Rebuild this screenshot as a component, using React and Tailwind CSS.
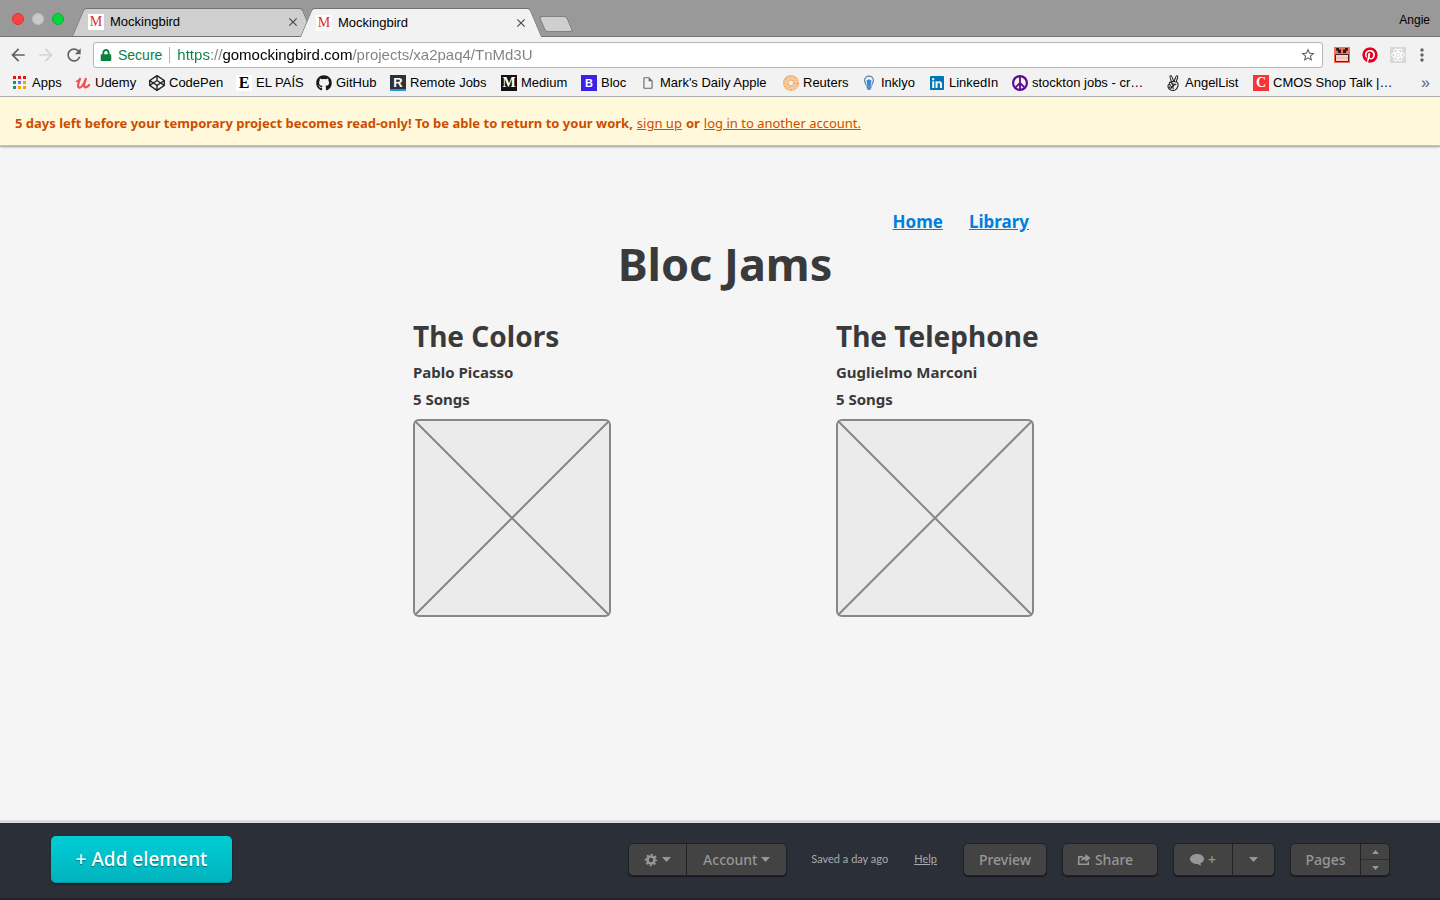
import React from "react";
import {
  MdArrowBack,
  MdArrowForward,
  MdRefresh,
  MdStarBorder,
  MdMoreVert,
  MdClose,
  MdOutlineInsertDriveFile,
} from "react-icons/md";
import { FaGithub, FaPinterest, FaLinkedin, FaCodepen, FaAngellist, FaCog, FaLock } from "react-icons/fa";

function AppsIcon() {
  const colors = ["#e11", "#e11", "#e11", "#0a9d58", "#4285f4", "#f5a300", "#0a9d58", "#f5a300", "#f5a300"];
  return (
    <svg viewBox="0 0 16 16" className="size-4">
      {colors.map((c, i) => (
        <rect key={i} x={1 + (i % 3) * 5} y={1 + Math.floor(i / 3) * 5} width="3" height="3" fill={c} />
      ))}
    </svg>
  );
}

function UdemyIcon() {
  return (
    <svg viewBox="0 0 16 16" className="size-4" fill="none" stroke="#ee5257" strokeLinecap="round" strokeLinejoin="round">
      <path d="M1.5 6.5C3 6 4.500 4.500 5 3.500" strokeWidth="1.500" />
      <path d="M5 4C4 7 2.800 9 3 11c.2 2.400 2.800 2 4.500-.5C8.800 8.600 10 6 10.800 3.800 9.800 7 8.800 9.500 9.200 11.200c.4 1.800 2.600 1.600 5-1.200" strokeWidth="2.200" />
    </svg>
  );
}

function LetterIcon({ letter, className }) {
  return (
    <span aria-hidden="true" className={"flex size-4 items-center justify-center leading-none " + className}>
      {letter}
    </span>
  );
}

function ReutersIcon() {
  return (
    <svg viewBox="0 0 16 16" className="size-4" fill="none" stroke="#f3ae6c">
      <circle cx="8" cy="8" r="7" strokeWidth="2" strokeDasharray="2 .5" />
      <circle cx="8" cy="8" r="5" strokeWidth="2" strokeDasharray="2.500 .4" stroke="#f6bd86" />
      <circle cx="8" cy="8" r="3" strokeWidth="1.800" strokeDasharray="2 .4" />
    </svg>
  );
}

function BulbIcon() {
  return (
    <svg viewBox="0 0 16 16" className="size-4">
      <path d="M5.500 10.500C5 9 3.600 8 3.600 5.500a4.400 4.400 0 0 1 8.800 0C12.400 8 11 9 10.500 10.500" fill="#eef2f6" stroke="#5c7fa8" strokeWidth="1.200" />
      <path d="M5.500 5.500 8 4.200l2.500 1.300L9.500 11h-3z" fill="#3f86cf" />
      <path d="M5.500 10.500h5v2.200L9.200 15H6.800l-1.300-2.300z" fill="#4d8fd0" />
    </svg>
  );
}

function PeaceIcon() {
  return (
    <svg viewBox="0 0 16 16" className="size-4">
      <circle cx="8" cy="8" r="8" fill="#5b0e91" />
      <circle cx="8" cy="8" r="5.800" fill="#f2f2f2" />
      <path d="M8 2v12M8 8l-4.200 4.200M8 8l4.200 4.200" fill="none" stroke="#5b0e91" strokeWidth="1.800" />
    </svg>
  );
}

function BrickIcon() {
  return (
    <svg viewBox="0 0 16 16" className="size-4">
      <rect width="16" height="16" fill="#f5705f" />
      <path d="M1.500 7.500h13v7h-13z" fill="#fbd3cd" stroke="#4a2420" />
      <path d="M2 11h12" stroke="#f3a198" strokeWidth=".8" />
      <path d="M2 1h3v1.500h2V6H4V4H2.500zM14 1h-3v1.500H9V6h3V4h1.500z" fill="#2b1a18" />
    </svg>
  );
}

function AtomIcon() {
  return (
    <svg viewBox="0 0 16 16" className="size-4" fill="none" stroke="#fff">
      <rect width="16" height="16" fill="#d8d8d8" stroke="none" />
      <circle cx="8" cy="8" r="1.500" fill="#fff" stroke="none" />
      <ellipse cx="8" cy="8" rx="6.500" ry="2.600" />
      <ellipse cx="8" cy="8" rx="6.500" ry="2.600" transform="rotate(60 8 8)" />
      <ellipse cx="8" cy="8" rx="6.500" ry="2.600" transform="rotate(120 8 8)" />
    </svg>
  );
}

function ShareIcon() {
  return (
    <svg viewBox="0 0 14 12" className="h-3 w-3.5" fill="#979797">
      <path d="M1 2h5.500L4.800 3.800H2.500v5.700h8V8.200L12 7v4H.8z" />
      <path d="M8.500 0 13.500 4 8.500 8V5.600C6.300 5.500 5 6.200 3.800 7.800 4 4.600 5.600 2.700 8.500 2.400z" />
    </svg>
  );
}

function CommentIcon() {
  return (
    <svg viewBox="0 0 14 12" className="h-3 w-3.5" fill="#979797">
      <path d="M7 0c3.900 0 7 2.200 7 5 0 1.900-1.400 3.500-3.500 4.300L11 12 7.800 10H7C3.100 10 0 7.800 0 5s3.100-5 7-5z" />
    </svg>
  );
}

function GearIcon() {
  return (
    <svg viewBox="0 0 14 14" className="size-3.5" fill="none" stroke="#979797">
      <circle cx="7" cy="7" r="3.500" strokeWidth="2.600" />
      <circle cx="7" cy="7" r="5.400" strokeWidth="1.800" strokeDasharray="2.120 2.120" strokeDashoffset="1.060" />
    </svg>
  );
}

function Caret({ up = false, small = false }) {
  return (
    <svg viewBox="0 0 8 4" className={small ? "h-1 w-[7px]" : "h-[5px] w-[9px]"} fill="#979797" preserveAspectRatio="none">
      <path d={up ? "M0 4h8L4 0z" : "M0 0h8L4 4z"} />
    </svg>
  );
}

function Tab({ active = false }) {
  const face = active
    ? "before:bg-[#f2f2f2] after:bg-[#f2f2f2] z-10"
    : "before:bg-[#cfcfcf] after:bg-[#cfcfcf] border-b border-[#717171]";
  return (
    <div
      role="tab"
      aria-selected={active}
      className={
        "relative -mr-3.5 flex w-[242px] items-center pr-3.5 pl-4 " +
        "before:absolute before:inset-y-0 before:left-1.5 before:w-1/2 before:-skew-x-[23deg] before:rounded-tl-[3px] before:border-t before:border-l before:border-[#717171] " +
        "after:absolute after:inset-y-0 after:right-1.5 after:w-1/2 after:skew-x-[23deg] after:rounded-tr-[3px] after:border-t after:border-r after:border-[#717171] " +
        face
      }
    >
      <div className="relative z-10 flex w-full items-center">
        <LetterIcon letter="M" className="bg-white font-['Liberation_Serif',serif] text-[14px] text-[#e02f26]" />
        <span className="ml-1.5 flex-1 text-[13px] text-black">Mockingbird</span>
        <button aria-label="Close tab" className="text-[#4a4a4a]">
          <MdClose className="size-3.5" />
        </button>
      </div>
    </div>
  );
}

const bookmarks = [
  { label: "Apps", icon: <AppsIcon /> },
  { label: "Udemy", icon: <UdemyIcon /> },
  { label: "CodePen", icon: <FaCodepen className="size-4 text-[#222]" /> },
  { label: "EL PAÍS", icon: <LetterIcon letter="E" className="bg-white font-['Liberation_Serif',serif] text-[16px] font-bold text-black" /> },
  { label: "GitHub", icon: <FaGithub className="size-4 text-[#191717]" /> },
  { label: "Remote Jobs", icon: <LetterIcon letter="R" className="border-b-2 border-[#1d9bd8] bg-[#2e3238] text-[13px] font-bold text-white" /> },
  { label: "Medium", icon: <LetterIcon letter="M" className="bg-[#111] font-['Liberation_Serif',serif] text-[14px] font-bold text-white" /> },
  { label: "Bloc", icon: <LetterIcon letter="B" className="bg-[#3a22e8] text-[11px] font-bold text-white" /> },
  { label: "Mark's Daily Apple", icon: <MdOutlineInsertDriveFile className="size-3.5 text-[#6a6d72]" /> },
  { label: "Reuters", icon: <ReutersIcon /> },
  { label: "Inklyo", icon: <BulbIcon /> },
  { label: "LinkedIn", icon: <FaLinkedin className="size-4 text-[#0077b5]" /> },
  { label: "stockton jobs - cr…", icon: <PeaceIcon /> },
  { label: "AngelList", icon: <FaAngellist className="size-4 text-[#222]" /> },
  { label: "CMOS Shop Talk |…", icon: <LetterIcon letter="C" className="bg-[#f93434] font-['Liberation_Serif',serif] text-[14px] font-bold text-white" /> },
];

function Browser() {
  return (
    <header className="font-['Liberation_Sans',Arial,sans-serif]">
      <div className="flex h-[37px] items-stretch bg-[#999] shadow-[inset_0_-1px_0_#717171]">
        <div className="flex w-[72px] items-center gap-2 pl-3">
          <button aria-label="Close window" className="size-3 rounded-full border border-[#e0302f] bg-[#fd4244]" />
          <button aria-label="Minimize window" className="size-3 rounded-full border border-[#bdbdbd] bg-[#cacaca]" />
          <button aria-label="Zoom window" className="size-3 rounded-full border border-[#06b32d] bg-[#04d73c]" />
        </div>
        <div role="tablist" className="flex pt-2">
          <Tab />
          <Tab active />
        </div>
        <button
          aria-label="New tab"
          className="mt-4 ml-3.5 h-4 w-7 skew-x-[23deg] self-start rounded-[3px] border border-[#808080] bg-[#cfcfcf]"
        />
        <button className="ml-auto pt-0.5 pr-2.5 text-[12px] text-black">Angie</button>
      </div>

      <div className="flex h-[31px] items-end bg-[#f2f2f2]">
        <div className="flex h-[26px] items-center gap-2 pr-[9px] pl-2 text-[#5f6368]">
          <button aria-label="Back"><MdArrowBack className="size-5" /></button>
          <button aria-label="Forward" className="text-[#d2d3d4]"><MdArrowForward className="size-5" /></button>
          <button aria-label="Reload"><MdRefresh className="size-5" /></button>
        </div>
        <div className="flex h-[26px] min-w-0 flex-1 items-center rounded-[3px] border border-[#b4b4b4] bg-white px-1.5">
          <FaLock className="size-3 text-[#0b8043]" />
          <span className="ml-1.5 text-[14px] text-[#0b8043]">Secure</span>
          <span className="mx-[7px] h-4 w-px bg-[#b4b4b4]" />
          <input
            aria-label="Address"
            defaultValue="https://gomockingbird.com/projects/xa2paq4/TnMd3U"
            className="min-w-0 flex-1 bg-[linear-gradient(to_right,#0b8043_33px,#808080_33px_45px,#000_45px_175px,#808080_175px)] bg-clip-text text-[15px] text-transparent outline-none"
          />
          <button aria-label="Bookmark this page" className="text-[#5f6368]"><MdStarBorder className="size-4" /></button>
        </div>
        <div className="flex h-[26px] items-center gap-3 pr-3 pl-[11px]">
          <button aria-label="Brick extension"><BrickIcon /></button>
          <button aria-label="Pinterest"><FaPinterest className="size-4 rounded-full bg-white text-[#e60023]" /></button>
          <button aria-label="React tools"><AtomIcon /></button>
          <button aria-label="Menu" className="-mr-1 -ml-1.5 text-[#5f6368]"><MdMoreVert className="size-5" /></button>
        </div>
      </div>

      <nav aria-label="Bookmarks" className="flex h-[29px] items-center border-b border-[#b4b4b8] bg-[#f2f2f2] pt-0.5 pr-2.5 pl-3">
        <ul className="grid flex-1 grid-cols-[63px_74px_87px_80px_74px_111px_80px_59px_143px_78px_68px_83px_153px_88px_1fr]">
          {bookmarks.map((b) => (
            <li key={b.label}>
              <a href="#" className="flex items-center gap-1 text-[13px] whitespace-nowrap text-black">
                <span className="flex size-4 shrink-0 items-center justify-center">{b.icon}</span>
                {b.label}
              </a>
            </li>
          ))}
        </ul>
        <button aria-label="More bookmarks" className="text-[16px] leading-none text-[#5f6368]">»</button>
      </nav>
    </header>
  );
}

function Album({ title, artist, songs }) {
  return (
    <article className="w-[198px] whitespace-nowrap">
      <h2 className="text-[28px] leading-9 font-bold">{title}</h2>
      <p className="mt-[5px] text-[15px] leading-[27px] font-bold">{artist}</p>
      <p className="text-[15px] leading-[27px] font-bold">{songs}</p>
      <svg viewBox="0 0 198 198" role="img" aria-label="Album cover" className="mt-1.5 w-full">
        <rect x="1" y="1" width="196" height="196" rx="5" fill="#ebebeb" stroke="#878787" strokeWidth="2" />
        <path d="M2 2l194 194M196 2L2 196" stroke="#878787" strokeWidth="2" />
      </svg>
    </article>
  );
}

const group =
  "flex h-[33px] overflow-hidden rounded-[5px] border border-[#1f2227] bg-[#434343] shadow-[0_1px_1px_#15171b] text-[14px] font-medium text-[#979797]";
const cell = "flex items-center justify-center";

function Toolbar() {
  return (
    <footer className="flex h-20 items-center border-t-3 border-b-2 border-t-[#dcdcdc] border-b-[#24262c] bg-[#2b2f37] pr-[50px] pb-0.5 pl-[51px]">
      <button className="h-[47px] w-[181px] rounded-[5px] bg-linear-to-b from-[#00ced6] to-[#00b2bd] text-[19px] font-medium text-white shadow-[0_1px_2px_#15171b,inset_0_-1px_0_#0099a5] text-shadow-[0_1px_1px_#00000066]">
        + Add element
      </button>
      <div className="ml-auto flex items-center">
        <div className={group}>
          <button aria-label="Settings" className={cell + " w-[57px] gap-1"}>
            <GearIcon />
            <Caret />
          </button>
          <button className={cell + " w-[100px] gap-1 border-l border-[#1f2227]"}>
            Account <Caret />
          </button>
        </div>
        <span className="ml-6 font-[Lato,sans-serif] text-[11px] text-[#a9abae]">Saved a day ago</span>
        <a href="#" className="mx-[26px] font-[Lato,sans-serif] text-[11px] text-[#a9abae] underline">Help</a>
        <div className="flex gap-[15px]">
          <div className={group}>
            <button className={cell + " w-[82px]"}>Preview</button>
          </div>
          <div className={group}>
            <button className={cell + " w-[94px] gap-1 pr-2.5"}>
              <ShareIcon /> Share
            </button>
          </div>
          <div className={group}>
            <button aria-label="Add comment" className={cell + " w-[58px] gap-1"}>
              <CommentIcon /> +
            </button>
            <button aria-label="Comment options" className={cell + " w-[42px] border-l border-[#1f2227]"}>
              <Caret />
            </button>
          </div>
          <div className={group}>
            <button className={cell + " w-[69px]"}>Pages</button>
            <div className="flex w-[29px] flex-col border-l border-[#1f2227]">
              <button aria-label="Previous page" className={cell + " flex-1"}><Caret up small /></button>
              <button aria-label="Next page" className={cell + " flex-1 border-t border-[#2c2e31]"}><Caret small /></button>
            </div>
          </div>
        </div>
      </div>
    </footer>
  );
}

export default function App() {
  return (
    <div className="flex min-h-screen flex-col bg-[#f5f5f5] font-['Noto_Sans',sans-serif]">
      <Browser />
      <div className="relative flex h-[49px] items-center gap-1 border-b border-[#c4c2b4] bg-[#fff8da] pt-1.5 pl-[15px] text-[13px] text-[#cb4e00] shadow-[0_1px_2px_#00000060]">
        <strong className="font-bold">
          5 days left before your temporary project becomes read-only! To be able to return to your work,
        </strong>
        <a href="#" className="underline">sign up</a>
        <strong className="font-bold">or</strong>
        <a href="#" className="underline">log in to another account.</a>
      </div>
      <main className="flex-1 pt-16 text-[#3a3a3a]">
        <div className="mx-auto max-w-[634px] pl-2.5">
          <nav className="flex justify-end gap-[26px] pr-2 text-[17px] leading-6 font-bold text-[#0080dc]">
            <a href="#" className="underline">Home</a>
            <a href="#" className="underline">Library</a>
          </nav>
          <h1 className="text-center text-[45px] leading-[60px] font-bold">Bloc Jams</h1>
          <div className="mt-6 flex gap-[225px]">
            <Album title="The Colors" artist="Pablo Picasso" songs="5 Songs" />
            <Album title="The Telephone" artist="Guglielmo Marconi" songs="5 Songs" />
          </div>
        </div>
      </main>
      <Toolbar />
    </div>
  );
}
